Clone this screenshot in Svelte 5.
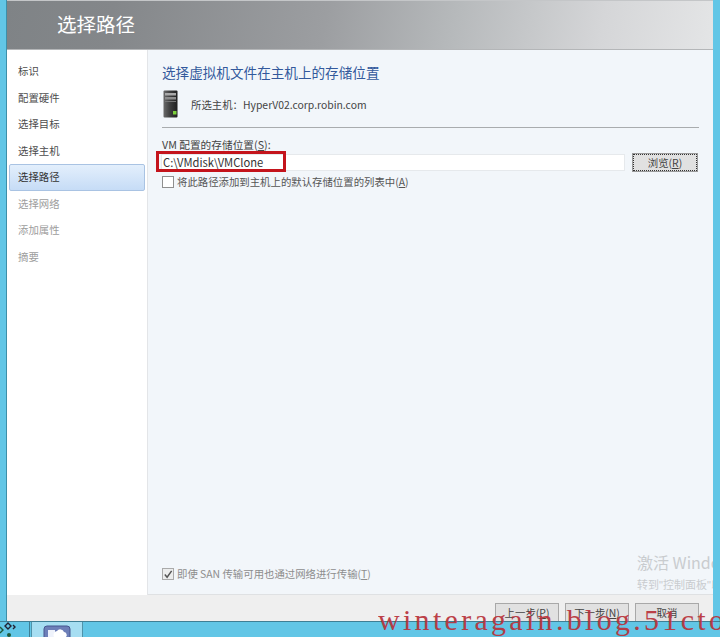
<script>
  const steps = [
    { label: '标识' },
    { label: '配置硬件' },
    { label: '选择目标' },
    { label: '选择主机' },
    { label: '选择路径', active: true },
    { label: '选择网络', muted: true },
    { label: '添加属性', muted: true },
    { label: '摘要', muted: true }
  ];
</script>

<div class="desktop">
  <div class="window">
    <header class="title-bar"><h1>选择路径</h1></header>

    <div class="body">
      <nav class="steps">
        {#each steps as step}
          <div class="step" class:active={step.active} class:muted={step.muted}>{step.label}</div>
        {/each}
      </nav>

      <main class="content">
        <h2>选择虚拟机文件在主机上的存储位置</h2>

        <div class="host">
          <svg class="server" width="16" height="28" viewBox="0 0 16 28">
            <defs>
              <linearGradient id="case" x1="0" y1="0" x2="1" y2="0">
                <stop offset="0" stop-color="#6b6b6b" />
                <stop offset="0.5" stop-color="#3c3c3c" />
                <stop offset="1" stop-color="#1f1f1f" />
              </linearGradient>
            </defs>
            <rect x="0.5" y="0.5" width="14" height="27" rx="1" fill="url(#case)" />
            <rect x="2" y="3" width="11" height="2.5" fill="#a9a9a9" />
            <rect x="2" y="7" width="11" height="2.5" fill="#8d8d8d" />
            <rect x="2" y="11" width="11" height="1" fill="#777" />
            <rect x="10" y="21" width="3.5" height="3.5" fill="#7bd03a" />
          </svg>
          <span>所选主机：HyperV02.corp.robin.com</span>
        </div>

        <div class="field-label">VM 配置的存储位置(<u>S</u>):</div>
        <div class="path-row">
          <div class="input">
            C:\VMdisk\VMClone
            <span class="highlight"></span>
          </div>
          <button class="browse">浏览(<u>R</u>)</button>
        </div>

        <label class="check">
          <span class="box"></span>
          <span>将此路径添加到主机上的默认存储位置的列表中(<u>A</u>)</span>
        </label>

        <label class="check san">
          <span class="box checked">
            <svg width="11" height="11" viewBox="0 0 11 11"><path d="M2 5.5 L4.5 8.5 L9.5 1.5" fill="none" stroke="#555" stroke-width="1.6" /></svg>
          </span>
          <span>即使 SAN 传输可用也通过网络进行传输(<u>T</u>)</span>
        </label>

        <div class="activate">
          <div class="big">激活 Windows</div>
          <div class="small">转到<span class="quote">"</span>控制面板<span class="quote">"</span>以激活 Windows</div>
        </div>
      </main>
    </div>

    <footer class="actions">
      <button>上一步(<u>P</u>)</button>
      <button>下一步(<u>N</u>)</button>
      <button>取消</button>
    </footer>
  </div>

  <div class="taskbar">
    <div class="tray-icon">
      <svg width="20" height="16" viewBox="0 0 20 16">
        <path d="M5 4 L8 1 L11 4 L8 7 Z" fill="none" stroke="#223" stroke-width="1.4" />
        <path d="M13 3 L15 5 L13 7" fill="none" stroke="#223" stroke-width="1.4" />
        <path d="M0 5 L3 8 L0 11" fill="none" stroke="#1d5a3a" stroke-width="1.4" />
        <circle cx="9" cy="13" r="2" fill="#1d5a3a" />
      </svg>
    </div>
    <div class="task">
      <svg width="28" height="12" viewBox="0 0 28 12">
        <rect x="1" y="1" width="26" height="16" rx="3" fill="#6d7fb8" stroke="#46568f" />
        <rect x="5" y="5" width="7" height="10" fill="#eef2fb" />
        <path d="M11 12 a4 4 0 0 1 3 -6 a4 4 0 0 1 7 1 a3 3 0 0 1 2 5 Z" fill="#fff" />
      </svg>
    </div>
  </div>

  <div class="watermark">winteragain.blog.51cto.com</div>
</div>

<style>
  :global(body) {
    margin: 0;
    background: #62c6e6;
  }

  .desktop {
    position: relative;
    width: 720px;
    height: 637px;
    overflow: hidden;
    display: flex;
    flex-direction: column;
    background: #62c6e6;
    font-family: "Noto Sans CJK SC", "Liberation Sans", sans-serif;
    font-size: 10.4px;
    color: #444;
  }

  .window {
    margin: 0 7px;
    height: 621px;
    flex: none;
    display: flex;
    flex-direction: column;
    box-shadow: -1px 0 0 #3d8fa8;
  }

  .title-bar {
    height: 50px;
    flex: none;
    display: flex;
    align-items: center;
    padding: 0 0 4px 50px;
    background: linear-gradient(100deg, #7f8386 0%, #84878a 15%, #9c9ea1 45%, #b6b9bb 63%, #d5d6d8 84%, #e4e5e6 100%);
    border-top: 1px solid #c4c6c8;
    border-bottom: 1px solid #b4b6b8;
    box-sizing: border-box;
  }

  h1 {
    margin: 0;
    font-size: 19.5px;
    font-weight: 400;
    color: #fff;
  }

  .body {
    flex: 1;
    display: flex;
    min-height: 0;
  }

  .steps {
    width: 141px;
    flex: none;
    box-sizing: border-box;
    padding: 8px 2px 0 2px;
    background: #fff;
    border-right: 1px solid #e3e5e8;
    display: flex;
    flex-direction: column;
  }

  .step {
    height: 26.5px;
    line-height: 26.5px;
    padding-left: 9px;
    color: #4c4c4c;
  }

  .step.active {
    background: linear-gradient(#e3effc, #c6dcf6);
    border: 1px solid #a9c3e3;
    border-radius: 2px;
    box-sizing: border-box;
    color: #333;
    line-height: 24.5px;
    padding-left: 8px;
  }

  .step.muted {
    color: #9d9d9d;
  }

  .content {
    position: relative;
    flex: 1;
    min-width: 0;
    background: #f2f6fa;
    padding: 13px 14px 0 14px;
    display: flex;
    flex-direction: column;
    border-bottom: 1px solid #dfe1e3;
  }

  h2 {
    margin: 0;
    font-size: 13.6px;
    line-height: 18px;
    font-weight: 400;
    color: #33599c;
  }

  .host {
    display: flex;
    align-items: center;
    gap: 12px;
    margin-top: 9px;
    height: 28px;
    padding-bottom: 9px;
    padding-left: 1px;
    border-bottom: 1px solid #a9acae;
    color: #444;
    font-size: 10.4px;
  }

  .field-label {
    margin-top: 9px;
    line-height: 15px;
    font-size: 10.7px;
  }

  .path-row {
    display: flex;
    align-items: center;
    gap: 8px;
    margin-top: 2px;
    margin-right: 2px;
  }

  .input {
    position: relative;
    flex: 1;
    height: 15px;
    line-height: 15px;
    padding-left: 1px;
    margin-left: -1px;
    background: #fff;
    border: 1px solid #e6e9ec;
    color: #333;
    font-size: 11.2px;
  }

  .highlight {
    position: absolute;
    left: -6px;
    top: -4px;
    width: 130px;
    height: 21px;
    box-sizing: border-box;
    border: 3px solid #c4141c;
  }

  .browse {
    width: 64px;
    height: 17px;
    padding: 0;
    box-sizing: border-box;
    background: #e1e1e1;
    border: 1px dotted #333;
    outline: 1px solid #9a9a9a;
    outline-offset: 0;
    font: inherit;
    font-size: 10.4px;
    color: #444;
  }

  .check {
    display: flex;
    align-items: center;
    gap: 3px;
    margin-top: 4px;
    line-height: 14px;
    color: #555;
  }

  .box {
    width: 10px;
    height: 10px;
    flex: none;
    background: #fff;
    border: 1px solid #8f8f8f;
    display: flex;
    align-items: center;
    justify-content: center;
  }

  .box.checked {
    background: #eceded;
    border-color: #aaa;
  }

  .check.san {
    margin-top: auto;
    margin-bottom: 13px;
    color: #8d8d8d;
  }

  .activate {
    position: absolute;
    left: 489px;
    top: 501px;
    width: 76px;
    overflow: hidden;
    white-space: nowrap;
    color: #c9cccf;
  }

  .big {
    font-size: 16px;
    line-height: 22px;
  }

  .small {
    font-size: 11px;
    line-height: 16px;
    margin-top: 3px;
  }

  .quote {
    font-family: "Liberation Sans", sans-serif;
  }

  .actions {
    height: 26px;
    flex: none;
    background: #efefef;
    display: flex;
    align-items: flex-start;
    justify-content: flex-end;
    gap: 6px;
    padding: 8px 14px 0 0;
    box-sizing: border-box;
  }

  .actions button {
    width: 64px;
    height: 18px;
    padding: 0 0 1px;
    background: #e1e1e1;
    border: 1px solid #a8a8a8;
    border-bottom: none;
    font: inherit;
    color: #444;
  }

  .taskbar {
    flex: 1;
    border-top: 1px solid #3f7f95;
    display: flex;
    align-items: stretch;
    background: #62c6e6;
  }

  .tray-icon {
    width: 29px;
    border-right: 1px solid #3f7f95;
    overflow: hidden;
  }

  .task {
    width: 52px;
    margin-left: 1px;
    background: #a6def2;
    border-left: 1px solid #4f93aa;
    border-right: 1px solid #4f93aa;
    display: flex;
    justify-content: center;
    padding-top: 3px;
    box-sizing: border-box;
    overflow: hidden;
  }

  .watermark {
    position: absolute;
    left: 378px;
    top: 604px;
    width: 342px;
    overflow: hidden;
    white-space: nowrap;
    font-family: "Liberation Serif", serif;
    font-size: 30px;
    line-height: 32px;
    letter-spacing: 3.3px;
    color: #b8323a;
    opacity: 0.92;
  }
</style>
